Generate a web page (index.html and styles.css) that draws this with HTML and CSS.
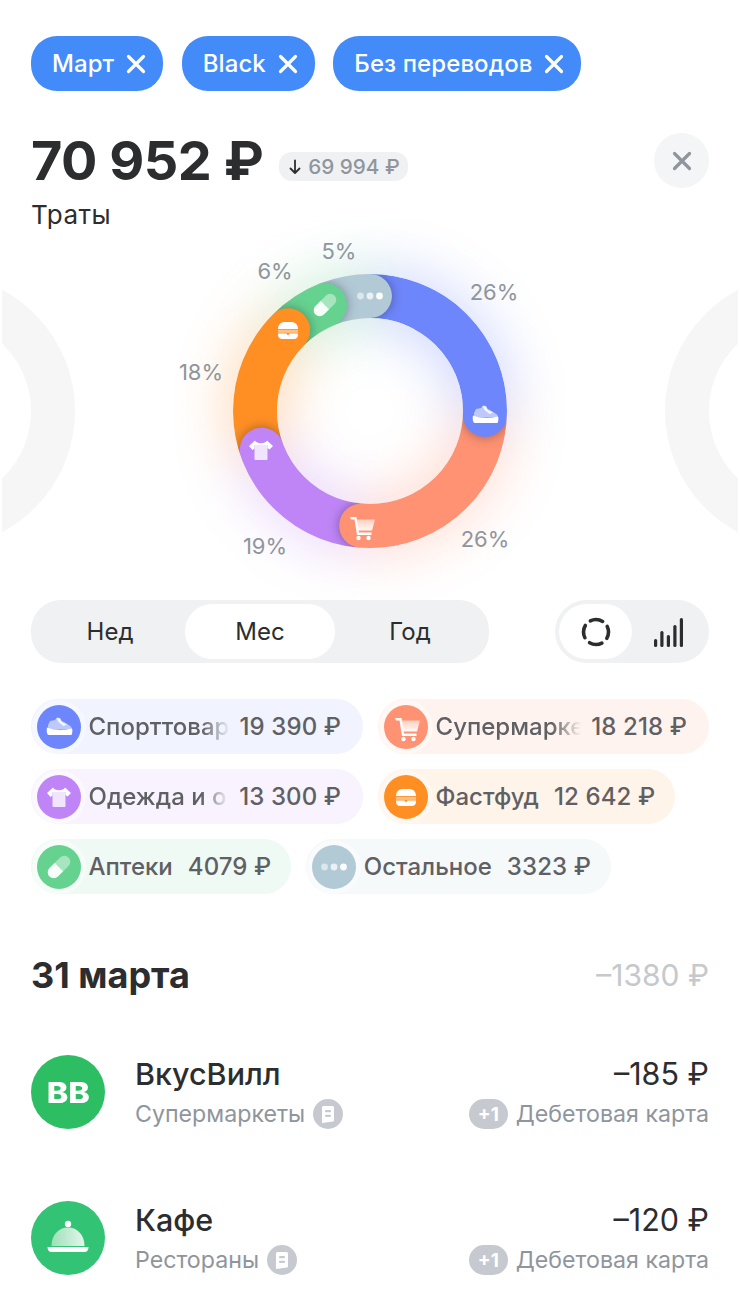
FILE: index.html
```html
<!DOCTYPE html>
<html lang="ru">
<head>
<meta charset="UTF-8" />
<meta name="viewport" content="width=device-width, initial-scale=1" />
<title>Траты</title>
<link rel="stylesheet" href="styles.css">
</head>
<body>

<!-- shared category glyphs, 44x44 box -->
<svg class="sprite" width="0" height="0">
  <defs>
    <linearGradient id="fadeDown" x1="0" y1="0" x2="0" y2="1">
      <stop offset="0" stop-color="#fff" stop-opacity=".55"/>
      <stop offset="1" stop-color="#fff" stop-opacity=".95"/>
    </linearGradient>
    <linearGradient id="dome" x1="0" y1="0" x2="1" y2="0">
      <stop offset="0" stop-color="#9ee0b9"/>
      <stop offset="1" stop-color="#e2f6ea"/>
    </linearGradient>
    <symbol id="i-shoe" viewBox="0 0 44 44">
      <path d="M11 20l2-4 5-1 2-2.500 3 .5 1.500 3 2.500 1 7 4.500 1 2.500H11z" fill="#fff" fill-opacity=".55"/>
      <path d="M19.500 13l3.500.5 2 3.500 5 2.500-3.500 1.500-5-4z" fill="#fff" fill-opacity=".85"/>
      <path d="M10 22.500c6 2.500 16 3 25 1 .7 2 .5 4.500-.5 6.500H12c-2.500 0-2.500-5-2-7.500z" fill="#fff"/>
    </symbol>
    <symbol id="i-cart" viewBox="0 0 44 44">
      <path d="M16.500 15.500H36l-3 11H18.500z" fill="url(#fadeDown)"/>
      <path d="M11 13h6.500l2.500 15.500h12.500v2.500H18l-2.500-15.500H12z" fill="#fff"/>
      <circle cx="19.500" cy="34" r="2.200" fill="#fff"/>
      <circle cx="29.500" cy="34" r="2.200" fill="#fff"/>
    </symbol>
    <symbol id="i-shirt" viewBox="0 0 44 44">
      <path d="M15.500 16h13v15a1 1 0 0 1-1 1h-11a1 1 0 0 1-1-1z" fill="#fff" fill-opacity=".78"/>
      <path d="M16 12.500c1.500 3.500 10.500 3.500 12 0l6 5.500-3.500 3.500-2-1.500V17H15.500v3.500l-2 1.500L10 18z" fill="#fff"/>
    </symbol>
    <symbol id="i-burger" viewBox="0 0 44 44">
      <path d="M12 21c0-4.500 3-7 7-7h6c4 0 7 2.500 7 7z" fill="#fff"/>
      <rect x="12" y="21.800" width="20" height="3" fill="#fff" fill-opacity=".45"/>
      <path d="M12 25.500h8.500l1.500 2 1.500-2H32v1.500c0 2.500-2 4-4 4H16c-2 0-4-1.500-4-4z" fill="#fff"/>
    </symbol>
    <symbol id="i-pill" viewBox="0 0 44 44">
      <g transform="rotate(45 22 22)">
        <path d="M16 22v-7.500a6 6 0 0 1 12 0V22z" fill="#fff" fill-opacity=".42"/>
        <path d="M16 22h12v7.500a6 6 0 0 1-12 0z" fill="#fff" fill-opacity=".95"/>
      </g>
    </symbol>
    <symbol id="i-dots" viewBox="0 0 44 44">
      <circle cx="12.500" cy="22" r="3.400" fill="#fff" fill-opacity=".55"/>
      <circle cx="22" cy="22" r="3.400" fill="#fff" fill-opacity=".72"/>
      <circle cx="31.500" cy="22" r="3.400" fill="#fff" fill-opacity=".95"/>
    </symbol>
    <symbol id="i-x" viewBox="0 0 20 20">
      <path d="M2.500 2.500l15 15M17.500 2.500l-15 15" fill="none" stroke="currentColor" stroke-width="3.200" stroke-linecap="round"/>
    </symbol>
    <symbol id="i-receipt" viewBox="0 0 30 30">
      <path d="M10.500 7h9a1.500 1.500 0 0 1 1.500 1.500V21.500c0 .5-.3.8-.8.9L9 24V8.500A1.500 1.500 0 0 1 10.500 7z" fill="#fff"/>
      <rect x="12" y="11" width="6" height="2.200" rx="1" fill="#c6cad0"/>
      <rect x="12" y="15.800" width="6" height="2.200" rx="1" fill="#c6cad0"/>
    </symbol>
    <mask id="ringMask" maskUnits="userSpaceOnUse" x="0" y="0" width="736" height="380">
      <circle cx="368" cy="191" r="115" fill="none" stroke="#fff" stroke-width="44"/>
    </mask>
  </defs>
</svg>

<div class="page">

  <div class="filters">
    <div class="filter">Март <svg class="filter-x"><use href="#i-x"/></svg></div>
    <div class="filter">Black <svg class="filter-x"><use href="#i-x"/></svg></div>
    <div class="filter">Без переводов <svg class="filter-x"><use href="#i-x"/></svg></div>
  </div>

  <div class="summary">
    <div class="total">70 952 ₽</div>
    <div class="delta">
      <svg class="delta-arrow" viewBox="0 0 14 16"><path d="M7 1.500v12M2.500 9.500L7 14l4.500-4.500" fill="none" stroke="#2c2d2e" stroke-width="1.800" stroke-linecap="round" stroke-linejoin="round"/></svg>
      69 994 ₽
    </div>
    <div class="close"><svg class="close-x"><use href="#i-x"/></svg></div>
  </div>
  <div class="summary-label">Траты</div>

  <div class="chart">
    <svg class="donut" viewBox="0 0 736 380" width="736" height="380">
      <!-- neighbouring months in the carousel -->
      <circle class="ghost" cx="-64" cy="191" r="115"/>
      <circle class="ghost" cx="800" cy="191" r="115"/>

      <!-- colour halo -->
      <g class="halo" transform="rotate(-90 368 191)">
        <circle class="arc" cx="368" cy="191" r="115" pathLength="360" stroke="#6e86fb" stroke-dasharray="92 360"/>
        <circle class="arc" cx="368" cy="191" r="115" pathLength="360" stroke="#ff9272" stroke-dasharray="92.500 360" stroke-dashoffset="-92"/>
        <circle class="arc" cx="368" cy="191" r="115" pathLength="360" stroke="#bf85f7" stroke-dasharray="66 360" stroke-dashoffset="-184.500"/>
        <circle class="arc" cx="368" cy="191" r="115" pathLength="360" stroke="#ff8f23" stroke-dasharray="64.500 360" stroke-dashoffset="-250.300"/>
        <circle class="arc" cx="368" cy="191" r="115" pathLength="360" stroke="#66d28f" stroke-dasharray="45.500 360" stroke-dashoffset="-314.600"/>
      </g>

      <!-- segments, painted so that every end cap sits on the next one -->
      <g mask="url(#ringMask)">
        <g transform="rotate(-90 368 191)">
          <circle class="arc" cx="368" cy="191" r="115" pathLength="360" stroke="#6e86fb" stroke-dasharray="40 360"/>
          <circle class="arc round" cx="368" cy="191" r="115" pathLength="360" stroke="#b2cad6" stroke-dasharray="23 360" stroke-dashoffset="-337"/>
          <circle class="arc round" cx="368" cy="191" r="115" pathLength="360" stroke="#66d28f" stroke-dasharray="22.400 360" stroke-dashoffset="-314.600"/>
          <circle class="arc round" cx="368" cy="191" r="115" pathLength="360" stroke="#ff8f23" stroke-dasharray="64.300 360" stroke-dashoffset="-250.300"/>
          <circle class="arc round" cx="368" cy="191" r="115" pathLength="360" stroke="#bf85f7" stroke-dasharray="65.800 360" stroke-dashoffset="-184.500"/>
          <circle class="arc round" cx="368" cy="191" r="115" pathLength="360" stroke="#ff9272" stroke-dasharray="92.500 360" stroke-dashoffset="-92"/>
        </g>
        <circle class="cap" cx="483" cy="195" r="22" fill="#6e86fb"/>
        <g transform="rotate(-90 368 191)">
          <circle class="arc" cx="368" cy="191" r="115" pathLength="360" stroke="#6e86fb" stroke-dasharray="64 360" stroke-dashoffset="-28"/>
        </g>
      </g>

      <use href="#i-dots" x="346" y="54" width="44" height="44"/>
      <use href="#i-pill" x="301" y="63" width="44" height="44"/>
      <use href="#i-burger" x="264" y="88" width="44" height="44"/>
      <use href="#i-shirt" x="237" y="208" width="44" height="44"/>
      <use href="#i-cart" x="337" y="284" width="44" height="44"/>
      <use href="#i-shoe" x="461" y="173" width="44" height="44"/>

      <text class="pct" x="337" y="31">5%</text>
      <text class="pct" x="273" y="51">6%</text>
      <text class="pct" x="492" y="72">26%</text>
      <text class="pct" x="199" y="152">18%</text>
      <text class="pct" x="483" y="319">26%</text>
      <text class="pct" x="263" y="326">19%</text>
    </svg>
  </div>

  <div class="controls">
    <div class="segments">
      <div class="segment">Нед</div>
      <div class="segment active">Мес</div>
      <div class="segment">Год</div>
    </div>
    <div class="view-switch">
      <div class="view active">
        <svg class="view-icon" viewBox="0 0 32 32"><circle cx="16" cy="16" r="12.500" fill="none" stroke="#2c2d2e" stroke-width="3.600" stroke-linecap="round" stroke-dasharray="12.800 6.835" stroke-dashoffset="6.200"/></svg>
      </div>
      <div class="view">
        <svg class="view-icon" viewBox="0 0 32 32">
          <rect x="1" y="23" width="3.200" height="8" rx="1.500" fill="#2c2d2e"/>
          <rect x="7.300" y="15" width="3.200" height="16" rx="1.500" fill="#2c2d2e"/>
          <rect x="13.800" y="19" width="3.200" height="12" rx="1.500" fill="#2c2d2e"/>
          <rect x="20.300" y="9" width="3.200" height="22" rx="1.500" fill="#2c2d2e"/>
          <rect x="26.800" y="2" width="3.200" height="29" rx="1.500" fill="#2c2d2e"/>
        </svg>
      </div>
    </div>
  </div>

  <div class="pills">
    <div class="pill wide pill-blue">
      <span class="pill-icon"><svg><use href="#i-shoe"/></svg></span>
      <span class="pill-name cut">Спорттовар</span>
      <span class="pill-sum">19 390 ₽</span>
    </div>
    <div class="pill wide pill-coral">
      <span class="pill-icon"><svg><use href="#i-cart"/></svg></span>
      <span class="pill-name cut">Супермарке</span>
      <span class="pill-sum">18 218 ₽</span>
    </div>
    <div class="pill wide pill-purple">
      <span class="pill-icon"><svg><use href="#i-shirt"/></svg></span>
      <span class="pill-name cut">Одежда и о</span>
      <span class="pill-sum">13 300 ₽</span>
    </div>
    <div class="pill pill-orange">
      <span class="pill-icon"><svg><use href="#i-burger"/></svg></span>
      <span class="pill-name">Фастфуд</span>
      <span class="pill-sum">12 642 ₽</span>
    </div>
    <div class="pill pill-green">
      <span class="pill-icon"><svg><use href="#i-pill"/></svg></span>
      <span class="pill-name">Аптеки</span>
      <span class="pill-sum">4079 ₽</span>
    </div>
    <div class="pill pill-gray">
      <span class="pill-icon"><svg><use href="#i-dots"/></svg></span>
      <span class="pill-name">Остальное</span>
      <span class="pill-sum">3323 ₽</span>
    </div>
  </div>

  <div class="day">
    <div class="day-title">31 марта</div>
    <div class="day-sum">–1380 ₽</div>
  </div>

  <div class="ops">
    <div class="op">
      <div class="op-logo logo-vv"><span class="vv">ВВ</span></div>
      <div class="op-main">
        <div class="op-title">ВкусВилл</div>
        <div class="op-sub">Супермаркеты <svg class="receipt"><use href="#i-receipt"/></svg></div>
      </div>
      <div class="op-side">
        <div class="op-title">–185 ₽</div>
        <div class="op-sub"><span class="bonus">+1</span> Дебетовая карта</div>
      </div>
    </div>
    <div class="op">
      <div class="op-logo logo-cafe">
        <svg class="dish" viewBox="0 0 74 74">
          <circle cx="37" cy="23" r="3.200" fill="#fff"/>
          <path d="M20.500 45c0-11 7-18.500 16.500-18.500S53.500 34 53.500 45z" fill="url(#dome)"/>
          <path d="M16.500 46h41c0 3-1.500 5-4 5h-33c-2.500 0-4-2-4-5z" fill="#fff"/>
        </svg>
      </div>
      <div class="op-main">
        <div class="op-title">Кафе</div>
        <div class="op-sub">Рестораны <svg class="receipt"><use href="#i-receipt"/></svg></div>
      </div>
      <div class="op-side">
        <div class="op-title">–120 ₽</div>
        <div class="op-sub"><span class="bonus">+1</span> Дебетовая карта</div>
      </div>
    </div>
  </div>

</div>

</body>
</html>
```

FILE: styles.css
```css
* {
  box-sizing: border-box;
}
html, body {
  margin: 0;
  background: #fff;
}
body {
  font-family: Inter, "Noto Sans", sans-serif;
  color: #2c2d2e;
}
.sprite {
  position: absolute;
}
.page {
  width: 740px;
  height: 1314px;
  padding: 36px 31px 0;
  overflow: hidden;
}

/* filter chips */
.filters {
  display: flex;
  gap: 18.5px;
}
.filter {
  display: flex;
  align-items: center;
  gap: 12px;
  height: 55px;
  padding: 0 17px 0 21px;
  border-radius: 26px;
  background: #428bf9;
  color: #fff;
  font-size: 24px;
  font-weight: 500;
  letter-spacing: 0.08px;
}
.filter-x {
  width: 20px;
  height: 20px;
}

/* total */
.summary {
  display: flex;
  align-items: center;
  height: 55px;
  margin-top: 42px;
}
.total {
  font-size: 54px;
  font-weight: 700;
  letter-spacing: -0.5px;
}
.delta {
  display: flex;
  align-items: center;
  gap: 6px;
  height: 29px;
  margin: 12px 0 0 16px;
  padding: 0 8px 0 9px;
  border-radius: 13px;
  background: #f0f1f3;
  color: #8f959c;
  font-size: 20.7px;
  font-weight: 500;
}
.delta-arrow {
  width: 14px;
  height: 16px;
}
.close {
  display: flex;
  align-items: center;
  justify-content: center;
  width: 55px;
  height: 55px;
  margin-left: auto;
  border-radius: 50%;
  background: #f4f5f6;
  color: #8f959c;
}
.close-x {
  width: 20px;
  height: 20px;
}
.summary-label {
  margin-top: 12px;
  font-size: 26px;
  line-height: 30px;
  letter-spacing: 0.5px;
}

/* donut */
.chart {
  width: 736px;
  height: 380px;
  margin: -10px 0 0 -29px;
}
.donut {
  display: block;
}
.ghost {
  fill: none;
  stroke: #f6f6f7;
  stroke-width: 44;
}
.arc {
  fill: none;
  stroke-width: 44;
}
.round {
  stroke-linecap: round;
  filter: drop-shadow(0 0 6px rgba(20, 20, 40, 0.4));
}
.cap {
  filter: drop-shadow(0 0 6px rgba(20, 20, 40, 0.4));
}
.halo {
  filter: blur(30px);
  opacity: 0.42;
}
.pct {
  fill: #8f959c;
  font-size: 22px;
  text-anchor: middle;
  dominant-baseline: central;
}

/* period and view switches */
.controls {
  display: flex;
  justify-content: space-between;
  position: relative;
}
.segments {
  display: flex;
  width: 458px;
  height: 63px;
  padding: 4px;
  border-radius: 30px;
  background: #f0f1f3;
}
.segment {
  display: flex;
  align-items: center;
  justify-content: center;
  flex: 1;
  border-radius: 27px;
  font-size: 24px;
}
.segment.active {
  background: #fff;
}
.view-switch {
  display: flex;
  width: 154px;
  height: 63px;
  padding: 4px;
  border-radius: 32px;
  background: #f0f1f3;
}
.view {
  display: flex;
  align-items: center;
  justify-content: center;
  width: 73px;
  border-radius: 28px;
}
.view.active {
  background: #fff;
}
.view-icon {
  width: 32px;
  height: 32px;
}

/* category pills */
.pills {
  display: flex;
  flex-wrap: wrap;
  gap: 15px;
  margin-top: 36px;
  width: 680px;
}
.pill {
  display: flex;
  align-items: center;
  height: 55px;
  padding: 0 20px 0 5.5px;
  border-radius: 27px;
  color: #5f6064;
  font-size: 24px;
  font-weight: 500;
}
.pill.wide {
  width: 332px;
  padding-right: 22px;
}
.pill.wide.pill-coral {
  width: 331px;
}
.pill-icon {
  flex: none;
  width: 44px;
  height: 44px;
  margin-right: 8px;
  border-radius: 50%;
  box-shadow: 0 0 0 5px rgba(255, 255, 255, 0.4);
}
.pill-icon svg {
  display: block;
  width: 44px;
  height: 44px;
}
.pill-name {
  margin-right: 15px;
  white-space: nowrap;
}
.pill-name.cut {
  flex: 1;
  min-width: 0;
  margin-right: 10px;
  overflow: hidden;
  -webkit-mask-image: linear-gradient(to right, #000 80%, transparent 100%);
  mask-image: linear-gradient(to right, #000 80%, transparent 100%);
}
.pill-sum {
  white-space: nowrap;
  letter-spacing: 0.1px;
}
.pill-blue { background: #f1f3ff; }
.pill-blue .pill-icon { background: #6e86fb; }
.pill-coral { background: #fff3ef; }
.pill-coral .pill-icon { background: #ff9272; }
.pill-purple { background: #f8f3fe; }
.pill-purple .pill-icon { background: #bf85f7; }
.pill-orange { background: #fff4e9; }
.pill-orange .pill-icon { background: #ff8f23; }
.pill-green { background: #f0faf4; }
.pill-green .pill-icon { background: #66d28f; }
.pill-gray { background: #f5f9fa; }
.pill-gray .pill-icon { background: #b2cad6; }

/* operations */
.day {
  display: flex;
  align-items: center;
  justify-content: space-between;
  height: 42px;
  margin-top: 60px;
}
.day-title {
  font-size: 36px;
  font-weight: 700;
}
.day-sum {
  color: #c5c8cc;
  font-size: 30px;
}
.ops {
  display: flex;
  flex-direction: column;
  gap: 72px;
  margin-top: 59px;
}
.op {
  display: flex;
  height: 74px;
}
.op-logo {
  display: flex;
  align-items: center;
  justify-content: center;
  flex: none;
  width: 74px;
  height: 74px;
  margin-right: 30px;
  border-radius: 50%;
}
.logo-vv {
  background: #2dbe64;
}
.logo-cafe {
  background: #33c374;
}
.vv {
  color: #fff;
  font-size: 29px;
  font-weight: 800;
  transform: scaleX(1.12);
}
.dish {
  width: 74px;
  height: 74px;
}
.op-main {
  flex: 1;
}
.op-side {
  display: flex;
  flex-direction: column;
  align-items: flex-end;
}
.op-title {
  font-size: 30.5px;
  font-weight: 500;
  line-height: 38px;
}
.op-side .op-title {
  font-weight: 400;
}
.op-sub {
  display: flex;
  align-items: center;
  gap: 8px;
  height: 30px;
  margin-top: 6px;
  color: #8f959c;
  font-size: 23.2px;
}
.receipt {
  width: 30px;
  height: 30px;
  border-radius: 50%;
  background: #c6cad0;
}
.bonus {
  display: flex;
  align-items: center;
  justify-content: center;
  width: 39px;
  height: 30px;
  border-radius: 15px;
  background: #c6cad0;
  color: #fff;
  font-size: 19px;
  font-weight: 700;
}
```
